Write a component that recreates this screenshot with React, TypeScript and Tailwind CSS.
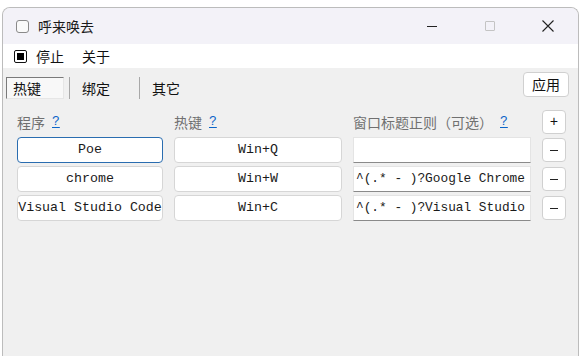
import React from 'react';

const cjk = { fontFamily: '"Noto Sans CJK SC", "Noto Sans", sans-serif' };
const mono = { fontFamily: '"Liberation Mono", "Noto Sans CJK SC", monospace' };

const rows = [
  { app: 'Poe', key: 'Win+Q', title: '', focused: true },
  { app: 'chrome', key: 'Win+W', title: '^(.* - )?Google Chrome', focused: false },
  { app: 'Visual Studio Code', key: 'Win+C', title: '^(.* - )?Visual Studio', focused: false },
];

function Help() {
  return <span className="ml-[7px] text-[#0a64c8] underline underline-offset-2 text-[13px]" style={mono}>?</span>;
}

export default function App() {
  return (
    <div className="w-[581px] h-[356px] bg-white pt-[7px] px-[2px] overflow-hidden" style={cjk}>
      <div className="h-[360px] rounded-t-[8px] border border-b-0 border-[#bcbcbc] overflow-hidden flex flex-col bg-[#f0f0f0]">
        {/* title bar */}
        <div className="h-[36px] shrink-0 bg-[#f3f2f8] flex items-center pl-[13px]">
          <span className="w-[13px] h-[13px] rounded-[3px] border border-[#8a8a8a] bg-[#fafafa]" />
          <span className="ml-[9px] text-[14px] text-[#1a1a1a]">呼来唤去</span>
          <div className="ml-auto flex items-center h-full">
            <div className="w-[58px] h-full flex items-center justify-center">
              <span className="w-[10px] h-px bg-[#222]" />
            </div>
            <div className="w-[58px] h-full flex items-center justify-center">
              <span className="w-[10px] h-[10px] rounded-[1px] border border-[#c4c4c4]" />
            </div>
            <div className="w-[58px] h-full flex items-center justify-center mr-[1px]">
              <svg width="12" height="12" viewBox="0 0 12 12">
                <path d="M0.5 0.5 L11.5 11.5 M11.5 0.5 L0.5 11.5" stroke="#222" strokeWidth="1.1" />
              </svg>
            </div>
          </div>
        </div>

        {/* menu bar */}
        <div className="h-[24px] shrink-0 bg-white flex items-center pl-[11px] text-[14px] text-[#111]">
          <span className="w-[13px] h-[13px] border-[1.5px] border-[#111] rounded-[2px] flex items-center justify-center bg-white">
            <span className="w-[7px] h-[7px] bg-black" />
          </span>
          <span className="ml-[9px]">停止</span>
          <span className="ml-[18px]">关于</span>
        </div>

        {/* tabs + apply */}
        <div className="flex items-start pl-[3px] pr-[9px]">
          <div className="flex items-center mt-[9px] h-[22px] text-[14px] text-[#111]">
            <div className="w-[58px] h-[22px] border border-t-[#7a7a7a] border-l-[#7a7a7a] border-b-[#e6e6e6] border-r-[#e6e6e6] bg-[#f8f8f8] pl-[6px] flex items-center">
              热键
            </div>
            <span className="ml-[5px] w-px h-[22px] bg-[#a8a8a8]" />
            <span className="ml-[12px] w-[57px]">绑定</span>
            <span className="w-px h-[22px] bg-[#a8a8a8]" />
            <span className="ml-[12px]">其它</span>
          </div>
          <button className="ml-auto mt-[4px] w-[46px] h-[25px] bg-white border border-[#d0d0d0] rounded-[4px] text-[14px] text-[#111] flex items-center justify-center">
            应用
          </button>
        </div>

        {/* grid */}
        <div className="mt-[11px] pl-[14px] grid grid-cols-[146px_168px_178px_24px] gap-x-[11px] gap-y-[3px] items-center">
          <div className="h-[24px] flex items-center text-[14px] text-[#707070]">
            程序<Help />
          </div>
          <div className="h-[24px] flex items-center text-[14px] text-[#707070]">
            热键<Help />
          </div>
          <div className="h-[24px] flex items-center text-[14px] text-[#707070]">
            窗口标题正则（可选）<Help />
          </div>
          <button className="h-[24px] bg-white border border-[#d0d0d0] rounded-[4px] text-[14px] leading-none text-[#111] flex items-center justify-center" style={mono}>
            +
          </button>

          {rows.map((r) => (
            <React.Fragment key={r.app}>
              <div
                className={`h-[26px] bg-white rounded-[4px] border ${r.focused ? 'border-[#2a6db0]' : 'border-[#d6d6d6]'} flex items-center justify-center text-[13.3px] text-[#1a1a1a] whitespace-nowrap`}
                style={mono}
              >
                {r.app}
              </div>
              <div className="h-[26px] bg-white rounded-[4px] border border-[#d6d6d6] flex items-center justify-center text-[13.3px] text-[#1a1a1a]" style={mono}>
                {r.key}
              </div>
              <div
                className="h-[26px] bg-white border border-[#e4e4e4] border-b-[#8a8a8a] flex items-center pl-[2px] text-[12.8px] text-[#1a1a1a] whitespace-nowrap"
                style={mono}
              >
                {r.title}
              </div>
              <button className="h-[24px] bg-white border border-[#d0d0d0] rounded-[4px] flex items-center justify-center">
                <span className="w-[8px] h-px bg-[#222]" />
              </button>
            </React.Fragment>
          ))}
        </div>
      </div>
    </div>
  );
}
